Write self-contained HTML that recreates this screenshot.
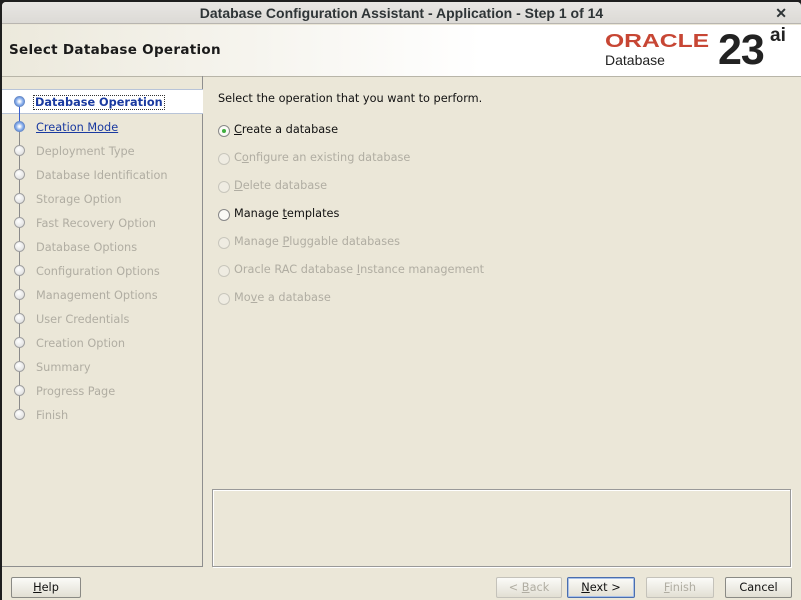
<!DOCTYPE html>
<html><head><style>
*{margin:0;padding:0;box-sizing:border-box}
body{width:801px;height:600px;background:#1e1e1e;position:relative;overflow:hidden;font-family:"DejaVu Sans",sans-serif;font-size:11.3px}
.win{position:absolute;left:2px;top:2px;width:799px;height:598px;background:#ebe7d8;border-radius:4px 4px 0 0;overflow:hidden}
.tb{position:absolute;left:0;top:0;width:799px;height:22px;background:linear-gradient(#e8e6e3,#dcdad6);border-bottom:1px solid #b8b5b0;text-align:center;font-size:14px;line-height:22px;color:#2e3436;font-weight:bold;font-family:"Liberation Sans",sans-serif}
.x{position:absolute;right:14px;top:0;font-size:14px}
.hd{position:absolute;left:0;top:23px;width:799px;height:52px;background:linear-gradient(90deg,#ece9dc,#fff 60%);border-bottom:1px solid #b8b5a8}
.hd h1{position:absolute;left:7px;top:17px;font-size:13.5px;font-weight:bold;color:#1a1a1a;letter-spacing:.3px}
.lp{position:absolute;left:0;top:74px;width:201px;height:491px;border-right:1px solid #8e8e8e;border-bottom:1px solid #8e8e8e}
.it{position:absolute;left:34px;color:#b0ada2;font-size:11.3px;margin-top:1px}
.dot{position:absolute;left:12px;width:11px;height:11px;border-radius:50%;background:radial-gradient(circle at 40% 35%,#fff,#d8d8d8);border:1px solid #a0a0a0}
.vl{position:absolute;left:17px;top:28px;width:1px;height:312px;background:#8a8a8a}
.sel{position:absolute;left:0;top:13px;width:201px;height:25px;background:#fff;border-top:1px solid #b8c4d8;border-bottom:1px solid #b8c4d8}
.rt{position:absolute;left:216px;font-size:11.3px;color:#111;margin-top:1px}
.rb{position:absolute;left:216px;width:12px;height:12px;border-radius:50%;border:1px solid #888;background:#fafaf6;margin-top:1px}
.dis{color:#b0ada2}
.rb.d{border-color:#c8c6bc;background:#efece2}
.box{position:absolute;left:210px;top:487px;width:579px;height:78px;border:1px solid #999;box-shadow:inset 1px 1px 0 #fff,1px 1px 0 #fff}
.btn{position:absolute;top:577px;height:21px;border:1px solid #8a8a85;border-radius:2px;background:linear-gradient(#fbfbf8,#e2dfd3);text-align:center;line-height:19px;font-size:11.3px;color:#111}
.btn.d{color:#b0ada2;border-color:#c4c2ba}
</style></head><body>
<div class="win">
<div class="tb">Database Configuration Assistant - Application - Step 1 of 14<span class="x">✕</span></div>
<div class="hd"><h1>Select Database Operation</h1>
<div style="position:absolute;left:603px;top:6px;font-family:'Liberation Sans',sans-serif;font-size:18px;font-weight:bold;color:#c74634;transform:scaleX(1.37);transform-origin:left">ORACLE</div>
<div style="position:absolute;left:603px;top:27px;font-family:'Liberation Sans',sans-serif;font-size:14px;color:#222">Database</div>
<div style="position:absolute;left:716px;top:1px;font-family:'Liberation Sans',sans-serif;font-size:43px;font-weight:bold;color:#222;letter-spacing:-1px">23</div>
<div style="position:absolute;left:768px;top:0px;font-family:'Liberation Sans',sans-serif;font-size:19px;font-weight:bold;color:#222">ai</div>
</div>
<div class="lp">
<div class="sel"></div>
<div class="vl"></div>
<div style="position:absolute;left:17px;top:28px;width:1px;height:24px;background:#3a5fcd"></div>
<div class="dot" style="top:20px;background:radial-gradient(circle,#fff 10%,#7aa4e8 60%);border-color:#6a8cc8"></div>
<div class="it" style="top:19px;color:#1a3aa0;font-weight:bold;outline:1px dotted #333;padding:0 1px;left:32px">Database Operation</div>
<div class="dot" style="top:45px;background:radial-gradient(circle,#fff 10%,#7aa4e8 60%);border-color:#6a8cc8"></div>
<div class="it" style="top:44px;color:#1a3aa0;text-decoration:underline">Creation Mode</div>
<div class="dot" style="top:69px"></div><div class="it" style="top:68px">Deployment Type</div>
<div class="dot" style="top:93px"></div><div class="it" style="top:92px">Database Identification</div>
<div class="dot" style="top:117px"></div><div class="it" style="top:116px">Storage Option</div>
<div class="dot" style="top:141px"></div><div class="it" style="top:140px">Fast Recovery Option</div>
<div class="dot" style="top:165px"></div><div class="it" style="top:164px">Database Options</div>
<div class="dot" style="top:189px"></div><div class="it" style="top:188px">Configuration Options</div>
<div class="dot" style="top:213px"></div><div class="it" style="top:212px">Management Options</div>
<div class="dot" style="top:237px"></div><div class="it" style="top:236px">User Credentials</div>
<div class="dot" style="top:261px"></div><div class="it" style="top:260px">Creation Option</div>
<div class="dot" style="top:285px"></div><div class="it" style="top:284px">Summary</div>
<div class="dot" style="top:309px"></div><div class="it" style="top:308px">Progress Page</div>
<div class="dot" style="top:333px"></div><div class="it" style="top:332px">Finish</div>
</div>
<div class="rt" style="top:89px">Select the operation that you want to perform.</div>
<div class="rb" style="top:122px"><div style="position:absolute;left:3px;top:3px;width:4px;height:4px;border-radius:50%;background:#3fae3f"></div></div>
<div class="rt" style="top:120px;left:232px"><u>C</u>reate a database</div>
<div class="rb d" style="top:150px"></div><div class="rt dis" style="top:148px;left:232px">C<u>o</u>nfigure an existing database</div>
<div class="rb d" style="top:178px"></div><div class="rt dis" style="top:176px;left:232px"><u>D</u>elete database</div>
<div class="rb" style="top:206px"></div><div class="rt" style="top:204px;left:232px">Manage <u>t</u>emplates</div>
<div class="rb d" style="top:234px"></div><div class="rt dis" style="top:232px;left:232px">Manage <u>P</u>luggable databases</div>
<div class="rb d" style="top:262px"></div><div class="rt dis" style="top:260px;left:232px">Oracle RAC database <u>I</u>nstance management</div>
<div class="rb d" style="top:290px"></div><div class="rt dis" style="top:288px;left:232px">Mo<u>v</u>e a database</div>
<div class="box"></div>
</div>
<div class="btn" style="left:11px;width:70px"><u>H</u>elp</div>
<div class="btn d" style="left:496px;width:66px">&lt; <u>B</u>ack</div>
<div class="btn" style="left:567px;width:68px;border-color:#4a6eae;box-shadow:inset 0 0 0 1px #a8c0e8"><u>N</u>ext &gt;</div>
<div class="btn d" style="left:646px;width:68px"><u>F</u>inish</div>
<div class="btn" style="left:725px;width:67px">Cancel</div>
</body></html>
